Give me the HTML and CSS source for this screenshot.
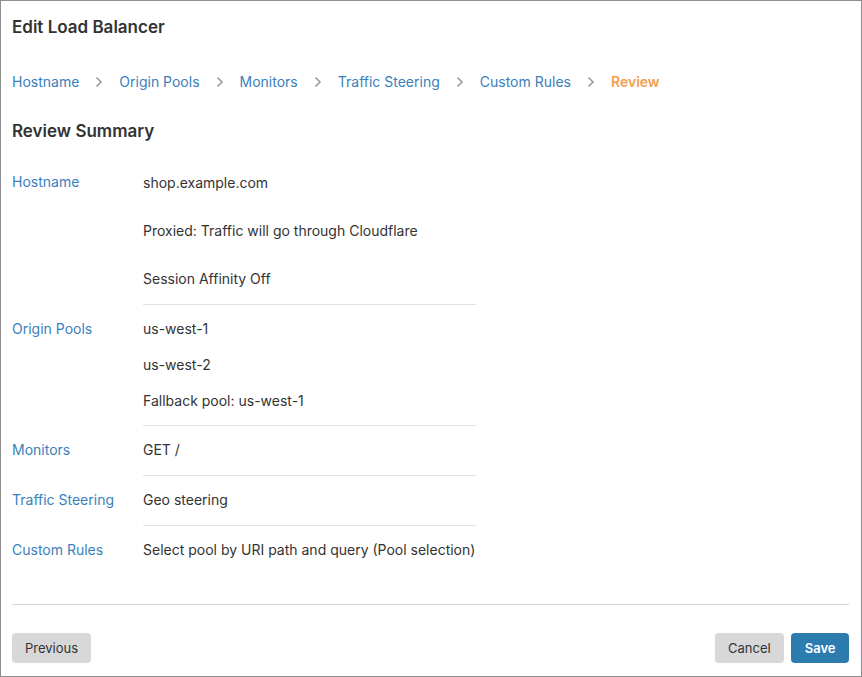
FILE: index.html
```html
<!DOCTYPE html>
<html>
<head>
<meta charset="utf-8">
<link rel="stylesheet" href="styles.css">
</head>
<body>
<div class="frame">
  <div class="main">
    <h1 class="title">Edit Load Balancer</h1>
    <nav class="crumbs">
      <span class="crumb">Hostname</span>
      <svg class="chev" viewBox="0 0 8 12" width="8" height="12"><polyline points="1.5,1.5 6,6 1.5,10.5" fill="none" stroke="#9a9a9a" stroke-width="1.6"/></svg>
      <span class="crumb">Origin Pools</span>
      <svg class="chev" viewBox="0 0 8 12" width="8" height="12"><polyline points="1.5,1.5 6,6 1.5,10.5" fill="none" stroke="#9a9a9a" stroke-width="1.6"/></svg>
      <span class="crumb">Monitors</span>
      <svg class="chev" viewBox="0 0 8 12" width="8" height="12"><polyline points="1.5,1.5 6,6 1.5,10.5" fill="none" stroke="#9a9a9a" stroke-width="1.6"/></svg>
      <span class="crumb">Traffic Steering</span>
      <svg class="chev" viewBox="0 0 8 12" width="8" height="12"><polyline points="1.5,1.5 6,6 1.5,10.5" fill="none" stroke="#9a9a9a" stroke-width="1.6"/></svg>
      <span class="crumb">Custom Rules</span>
      <svg class="chev" viewBox="0 0 8 12" width="8" height="12"><polyline points="1.5,1.5 6,6 1.5,10.5" fill="none" stroke="#9a9a9a" stroke-width="1.6"/></svg>
      <span class="crumb current">Review</span>
    </nav>
    <h2 class="subtitle">Review Summary</h2>
    <div class="summary">
      <div class="row first">
        <div class="label">Hostname</div>
        <div class="values wide">
          <div>shop.example.com</div>
          <div>Proxied: Traffic will go through Cloudflare</div>
          <div>Session Affinity Off</div>
        </div>
      </div>
      <div class="row">
        <div class="label">Origin Pools</div>
        <div class="values multi">
          <div>us-west-1</div>
          <div>us-west-2</div>
          <div>Fallback pool: us-west-1</div>
        </div>
      </div>
      <div class="row">
        <div class="label">Monitors</div>
        <div class="values"><div>GET /</div></div>
      </div>
      <div class="row">
        <div class="label">Traffic Steering</div>
        <div class="values"><div>Geo steering</div></div>
      </div>
      <div class="row last">
        <div class="label">Custom Rules</div>
        <div class="values"><div>Select pool by URI path and query (Pool selection)</div></div>
      </div>
    </div>
  </div>
  <div class="footer">
    <button class="btn grey">Previous</button>
    <div class="right">
      <button class="btn grey">Cancel</button>
      <button class="btn blue">Save</button>
    </div>
  </div>
</div>
</body>
</html>
```
FILE: styles.css
```css
html, body {
  margin: 0;
  padding: 0;
  background: #fff;
}
body {
  font-family: Inter, "Noto Sans", Roboto, sans-serif;
  color: #333;
}
.frame {
  width: 862px;
  height: 677px;
  box-sizing: border-box;
  border: 1px solid #8e8e8e;
  padding: 0 12px 0 11px;
  display: flex;
  flex-direction: column;
}
.main {
  flex: 1;
}
.title {
  margin: 14px 0 0;
  font-size: 17px;
  line-height: 24px;
  font-weight: 600;
  color: #333;
}
.crumbs {
  margin-top: 33px;
  display: flex;
  align-items: center;
  gap: 16px;
  height: 20px;
  font-size: 14px;
  line-height: 20px;
}
.crumb {
  color: #3a80bb;
}
.crumb.current {
  color: #f59d4f;
  font-weight: 600;
}
.chev {
  display: block;
}
.subtitle {
  margin: 27px 0 0;
  font-size: 17px;
  line-height: 24px;
  font-weight: 600;
  color: #333;
}
.summary {
  margin-top: 15px;
  font-size: 14px;
  line-height: 20px;
}
.row {
  display: flex;
}
.label {
  width: 131px;
  padding-top: 14px;
  color: #3a80bb;
}
.values {
  width: 333px;
  padding: 14px 0 15px;
  border-bottom: 1px solid #e3e3e3;
  display: flex;
  flex-direction: column;
  gap: 16px;
  color: #333;
}
.row.first .values {
  padding-top: 15px;
}
.values.wide {
  gap: 28px;
}
.values.multi {
  padding-bottom: 14px;
}
.row.last .values {
  border-bottom: none;
}
.footer {
  border-top: 1px solid #d4d4d4;
  padding: 28px 0 13px;
  display: flex;
  justify-content: space-between;
  align-items: center;
}
.right {
  display: flex;
  gap: 7px;
}
.btn {
  height: 30px;
  border: none;
  border-radius: 4px;
  font-family: Inter, "Noto Sans", Roboto, sans-serif;
  font-size: 13px;
  padding: 0 13px;
  cursor: pointer;
}
.right .btn {
  padding: 0 13.5px;
}
.btn.grey {
  background: #d8d8da;
  color: #333;
}
.btn.blue {
  background: #2c7cb0;
  color: #fff;
  font-weight: 600;
}
```
